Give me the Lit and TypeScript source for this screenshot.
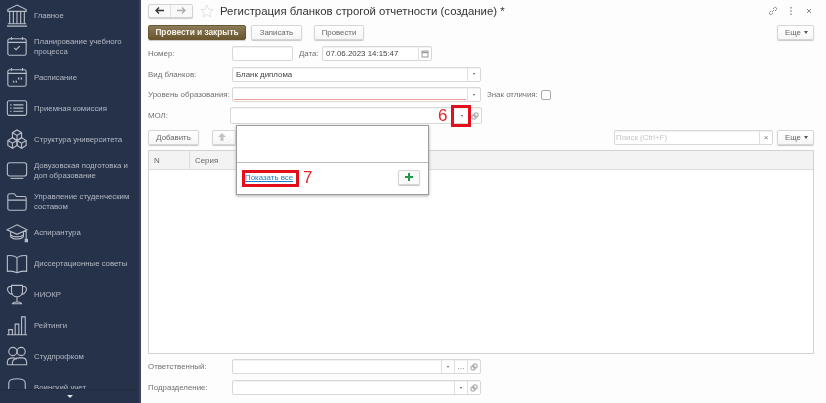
import { LitElement, html, css, svg } from "lit";
import { customElement } from "lit/decorators.js";

const icons: Record<string, unknown> = {
  bank: svg`<path d="M12 1 L22 6 V8 H2 V6 Z M2 21.5 H22 M1 24 H23 M4 8 V21 M8 8 V21 M12 8 V21 M16 8 V21 M20 8 V21"/>`,
  plan: svg`<rect x="2" y="4" width="20" height="18" rx="2"/><path d="M2 8 H22 M6 2 V5 M18 2 V5 M9 14 L11 16 L15 12"/>`,
  sched: svg`<rect x="2" y="4" width="20" height="18" rx="2"/><path d="M2 8 H22 M6 2 V5 M18 2 V5"/><path d="M7.5 17 h1.5 M10.5 17 h1.5 M13 13.5 h1.5 M16 13.5 h1.5" stroke-width="2"/>`,
  list: svg`<rect x="1.5" y="4" width="21" height="16" rx="2"/><path d="M8 8.5 H19 M8 12 H19 M8 15.5 H19 M4.5 8.5 H6 M4.5 12 H6 M4.5 15.5 H6"/>`,
  cubes: svg`<path d="M12 2 L17 5 V10.5 L12 13.5 L7 10.5 V5 Z M7 5 L12 8 L17 5 M12 8 V13.5"/><path d="M7 10.5 L12 13.5 V19 L7 22 L2 19 V13.5 Z M2 13.5 L7 16.5 L12 13.5 M7 16.5 V22"/><path d="M17 10.5 L22 13.5 V19 L17 22 L12 19 V13.5 Z M12 13.5 L17 16.5 L22 13.5 M17 16.5 V22"/>`,
  screen: svg`<rect x="1.5" y="4" width="21" height="14.5" rx="2.5"/><path d="M5 21 H19"/>`,
  folder: svg`<path d="M2 20 V6 a2 2 0 0 1 2-2 H9 L11.5 7 H20 a2 2 0 0 1 2 2 V20 a2 2 0 0 1-2 2 H4 a2 2 0 0 1-2-2 Z M2 11 H22"/>`,
  cap: svg`<path d="M12 4 L23 9.5 L12 14.5 L1 9.5 Z M5 12 V17 C8 20.5 16 20.5 19 17 V12 M5 15 C8 18 16 18 19 15 M22 10 V20"/><rect x="21" y="20" width="2.5" height="2.5" fill="#b9bec8"/>`,
  book: svg`<path d="M12 6 C9 4 5 3.5 1.5 4 V21 C5 20.5 9 21 12 22.5 C15 21 19 20.5 22.5 21 V4 C19 3.5 15 4 12 6 Z M12 6 V22.5"/>`,
  cup: svg`<path d="M6 2.5 H18 V9 C18 13 15 15 12 15 C9 15 6 13 6 9 Z M6 4 C2 3 1 6 2 8.5 C3 11 5 12 7 12.5 M18 4 C22 3 23 6 22 8.5 C21 11 19 12 17 12.5 M12 15 V20 M7 22.5 C8 20 16 20 17 22.5 Z"/>`,
  bars: svg`<path d="M1 22.5 H23 M3 22.5 V17 H7 V22.5 M10 22.5 V11 H14 V22.5 M17 22.5 V3 H21 V22.5"/>`,
  people: svg`<circle cx="7.5" cy="7" r="4.5"/><circle cx="16.5" cy="7" r="4.5"/><path d="M1.5 21.5 V18 C2 15 4 14 7.5 14 C9 14 10.5 14.5 11.5 15.5 M7 21.5 V19 C7.5 16 10 14 15 14 H17.5 C20.5 14 22.5 16 22.5 19 V21.5 Z M1.5 21.5 H7"/>`,
  arch: svg`<path d="M3 26 V8 C3 5 5 4 7 3.5 C10 2.8 14 2.8 17 3.5 C19 4 21 5 21 8 V26"/>`,
};

const nav: [string, string][] = [
  ["bank", "Главное"],
  ["plan", "Планирование учебного процесса"],
  ["sched", "Расписание"],
  ["list", "Приемная комиссия"],
  ["cubes", "Структура университета"],
  ["screen", "Довузовская подготовка и доп образование"],
  ["folder", "Управление студенческим составом"],
  ["cap", "Аспирантура"],
  ["book", "Диссертационные советы"],
  ["cup", "НИОКР"],
  ["bars", "Рейтинги"],
  ["people", "Студпрофком"],
  ["arch", "Воинский учет"],
];

const copyIcon = svg`<rect x="3" y="1" width="4" height="4" rx="1"/><rect x="1" y="3" width="4" height="4" rx="1"/>`;

@customElement("app-root")
export class AppRoot extends LitElement {
  static styles = css`
    :host { display: block; width: 826px; height: 403px; overflow: hidden; font-family: "Liberation Sans", Arial, sans-serif; filter: blur(0.4px); background: #fdfdfd; }
    * { box-sizing: border-box; }
    .app { display: flex; width: 826px; height: 403px; }
    .side { position: relative; width: 141px; flex: none; height: 403px; overflow: hidden; background: #26324a; border-right: 2px solid #3a4558; }
    .item { display: flex; align-items: center; height: 31px; padding-left: 6px; gap: 6px; color: #b4b9c3; font-size: 7.8px; line-height: 10px; }
    .item svg { width: 22px; height: 24px; flex: none; fill: none; stroke: #b9bec8; stroke-width: 1.2; }
    .item span { width: 101px; flex: none; }
    .more { position: absolute; left: 0; right: 0; bottom: 0; height: 14px; background: #26324a; border-top: 1px solid #222c41; display: flex; justify-content: center; align-items: center; }
    .more i { width: 0; height: 0; border: 3px solid transparent; border-top: 3px solid #e4e6ea; border-bottom: 0; }
    .main { position: relative; flex: 1; padding: 0 12px 0 7px; color: #707070; font-size: 7.9px; }
    .head { display: flex; align-items: center; height: 21px; }
    .hist { display: flex; width: 45px; height: 14px; border: 1px solid #d4d4d4; border-radius: 2px; box-shadow: 0 1px 1px #ccc; background: #f9f9f9; }
    .hist b { flex: 1; display: flex; align-items: center; justify-content: center; }
    .hist b + b { border-left: 1px solid #e2e2e2; }
    .hist svg { width: 9px; height: 7px; fill: none; stroke: #333; stroke-width: 1.3; }
    .hist b + b svg { stroke: #aaa; }
    .star { width: 14px; height: 14px; margin-left: 7px; fill: #fff; stroke: #cfcfcf; }
    .title { margin-left: 6px; font-size: 11.4px; color: #333; white-space: nowrap; }
    .tools { margin-left: auto; display: flex; align-items: center; gap: 8px; margin-right: 0; }
    .tools svg { width: 10px; height: 10px; fill: none; stroke: #8a8a8a; }
    .btnrow { display: flex; align-items: center; height: 22px; }
    .btn { display: flex; align-items: center; justify-content: center; height: 15px; border: 1px solid #d6d6d6; border-radius: 2px; background: linear-gradient(#fff, #f6f6f6); box-shadow: 0 1px 1px #c8c8c8; color: #666; font-size: 7.8px; white-space: nowrap; }
    .primary { width: 98px; background: linear-gradient(#8b7a58, #6a5730); border-color: #6a5730; color: #f4f0e6; font-weight: 700; font-size: 8.3px; }
    .w1 { width: 51px; margin-left: 5px; }
    .w2 { width: 50px; margin-left: 12px; }
    .w3 { width: 51px; }
    .up { width: 24px; margin-left: 13px; color: #bbb; justify-content: flex-start; padding-left: 5px; }
    .up svg { width: 8px; height: 8px; fill: #c4c4c4; }
    .mr { margin-left: auto; width: 37px; padding-left: 2px; }
    .tri { display: inline-block; margin-left: 3px; width: 0; height: 0; border: 2px solid transparent; border-top: 3px solid #555; border-bottom: 0; }
    .row { display: flex; align-items: center; height: 21px; }
    .row.s { height: 20px; }
    .lab { width: 84px; flex: none; white-space: nowrap; }
    .inp { display: flex; height: 15px; border: 1px solid #d8d8d8; border-radius: 2px; background: #fff; align-items: stretch; box-shadow: inset 0 1px 1px #f1f1f1; }
    .inp.f { width: 249px; }
    .inp span.t { flex: 1; padding: 0 3px; line-height: 13px; color: #444; min-width: 0; position: relative; white-space: nowrap; overflow: hidden; }
    .inp .c { width: 13px; flex: none; border-left: 1px solid #e0e0e0; display: flex; align-items: center; justify-content: center; color: #666; }
    .dd { width: 0; height: 0; border: 1.5px solid transparent; border-top: 2.5px solid #555; border-bottom: 0; }
    .c svg { width: 8px; height: 8px; fill: none; stroke: #999; }
    .req { position: absolute; left: 1px; right: 1px; bottom: 1px; height: 1px; background: #f29a9a; }
    .num { width: 61px; }
    .datel { margin-left: 6px; width: 23px; }
    .date { width: 110px; }
    .mol { margin-left: -2px; width: 252px; height: 17px; }
    .mol .c { border: 0; width: 13px; }
    .sign { margin-left: 6px; width: 54px; white-space: nowrap; }
    .chk { width: 10px; height: 10px; border: 1px solid #aaa; border-radius: 2px; background: #fff; }
    .search { width: 159px; margin-left: auto; }
    .search span.t { color: #c4c4c4; padding: 0 1px; }
    .search .c { color: #777; font-size: 8px; }
    .gap { margin-left: 4px; width: 37px; padding-left: 2px; }
    .table { margin-top: 2px; height: 204px; border: 1px solid #d2d2d2; background: #fff; }
    .thead { display: flex; height: 19px; background: #f3f3f3; border-bottom: 1px solid #ddd; align-items: center; color: #666; }
    .thead div { padding-left: 5px; height: 100%; display: flex; align-items: center; }
    .thead div:first-child { width: 41px; border-right: 1px solid #ddd; }
    .bottom { margin-top: 2px; }
    .popup { position: absolute; left: 95px; top: 125px; width: 193px; height: 70px; background: #fff; border: 1px solid #9b9b9b; box-shadow: 0 1px 3px #aaa; display: flex; flex-direction: column; }
    .pempty { height: 37px; border-bottom: 1px solid #bbb; flex: none; }
    .pfoot { flex: 1; display: flex; align-items: center; justify-content: space-between; padding: 0 8px 3px 8px; }
    .link { color: #1b7fd0; text-decoration: underline; font-size: 7.9px; }
    .plus { width: 22px; height: 15px; display: flex; align-items: center; justify-content: center; border: 1px solid #d6d6d6; border-radius: 2px; box-shadow: 0 1px 1px #c4c4c4; background: #fafafa; }
    .plus svg { width: 8px; height: 8px; fill: #1f9a4a; }
    .mark { position: absolute; border: 3px solid #e30f1c; }
    .m6 { left: 310px; top: 105px; width: 20px; height: 22px; }
    .m7 { left: 101px; top: 170px; width: 57px; height: 17px; }
    .n { position: absolute; color: #e5252c; font-family: "Liberation Sans", sans-serif; font-size: 17px; line-height: 20px; }
    .n6 { left: 297px; top: 106px; }
    .n7 { left: 162px; top: 168px; }
  `;

  render() {
    return html`<div class="app">
      <aside class="side">
        ${nav.map(([i, t]) => html`<div class="item"><svg viewBox="0 0 24 26">${icons[i]}</svg><span>${t}</span></div>`)}
        <div class="more"><i></i></div>
      </aside>
      <main class="main">
        <div class="head">
          <div class="hist">
            <b><svg viewBox="0 0 9 7"><path d="M9 3.5 H1 M4 .5 L1 3.5 L4 6.5"/></svg></b>
            <b><svg viewBox="0 0 9 7"><path d="M0 3.5 H8 M5 .5 L8 3.5 L5 6.5"/></svg></b>
          </div>
          <svg class="star" viewBox="0 0 24 24"><path d="M12 2 L15 9 L22.5 9.5 L16.8 14.5 L18.7 22 L12 18 L5.3 22 L7.2 14.5 L1.5 9.5 L9 9 Z"/></svg>
          <div class="title">Регистрация бланков строгой отчетности (создание) *</div>
          <div class="tools">
            <svg viewBox="0 0 10 10"><path d="M4 6 L6 4 M3 5 L1.5 6.5 A1.5 1.5 0 0 0 3.5 8.5 L5 7 M5 3 L6.5 1.5 A1.5 1.5 0 0 1 8.5 3.5 L7 5"/></svg>
            <svg viewBox="0 0 10 10"><path d="M5 1 V2.5 M5 4.2 V5.8 M5 7.5 V9" stroke-width="1.4"/></svg>
            <svg viewBox="0 0 10 10"><path d="M3 3 L7 7 M7 3 L3 7"/></svg>
          </div>
        </div>
        <div class="btnrow">
          <div class="btn primary">Провести и закрыть</div>
          <div class="btn w1">Записать</div>
          <div class="btn w2">Провести</div>
          <div class="btn mr">Еще<i class="tri"></i></div>
        </div>
        <div class="row">
          <div class="lab">Номер:</div>
          <div class="inp num"></div>
          <div class="datel">Дата:</div>
          <div class="inp date"><span class="t">07.06.2023 14:15:47</span><div class="c"><svg viewBox="0 0 8 8"><rect x="1" y="1" width="6" height="6"/><path d="M1 2.5 H7" stroke-width="1.5"/></svg></div></div>
        </div>
        <div class="row s">
          <div class="lab">Вид бланков:</div>
          <div class="inp f"><span class="t">Бланк диплома</span><div class="c"><i class="dd"></i></div></div>
        </div>
        <div class="row">
          <div class="lab">Уровень образования:</div>
          <div class="inp f"><span class="t"><i class="req"></i></span><div class="c"><i class="dd"></i></div></div>
          <div class="sign">Знак отличия:</div>
          <div class="chk"></div>
        </div>
        <div class="row">
          <div class="lab">МОЛ:</div>
          <div class="inp mol"><span class="t"></span><div class="c"><i class="dd"></i></div><div class="c"><svg viewBox="0 0 8 8">${copyIcon}</svg></div></div>
        </div>
        <div class="btnrow">
          <div class="btn w3">Добавить</div>
          <div class="btn up"><svg viewBox="0 0 8 8"><path d="M4 0 L8 4 H5.5 V8 H2.5 V4 H0 Z"/></svg></div>
          <div class="inp search"><span class="t">Поиск (Ctrl+F)</span><div class="c">×</div></div>
          <div class="btn gap">Еще<i class="tri"></i></div>
        </div>
        <div class="table">
          <div class="thead"><div>N</div><div>Серия</div></div>
        </div>
        <div class="bottom">
          <div class="row">
            <div class="lab">Ответственный:</div>
            <div class="inp f"><span class="t"></span><div class="c"><i class="dd"></i></div><div class="c">…</div><div class="c"><svg viewBox="0 0 8 8">${copyIcon}</svg></div></div>
          </div>
          <div class="row">
            <div class="lab">Подразделение:</div>
            <div class="inp f"><span class="t"></span><div class="c"><i class="dd"></i></div><div class="c"><svg viewBox="0 0 8 8">${copyIcon}</svg></div></div>
          </div>
        </div>
        <div class="popup">
          <div class="pempty"></div>
          <div class="pfoot">
            <span class="link">Показать все</span>
            <div class="plus"><svg viewBox="0 0 8 8"><path d="M3 0 H5 V3 H8 V5 H5 V8 H3 V5 H0 V3 H3 Z"/></svg></div>
          </div>
        </div>
        <div class="mark m6"></div>
        <div class="n n6">6</div>
        <div class="mark m7"></div>
        <div class="n n7">7</div>
      </main>
    </div>`;
  }
}
